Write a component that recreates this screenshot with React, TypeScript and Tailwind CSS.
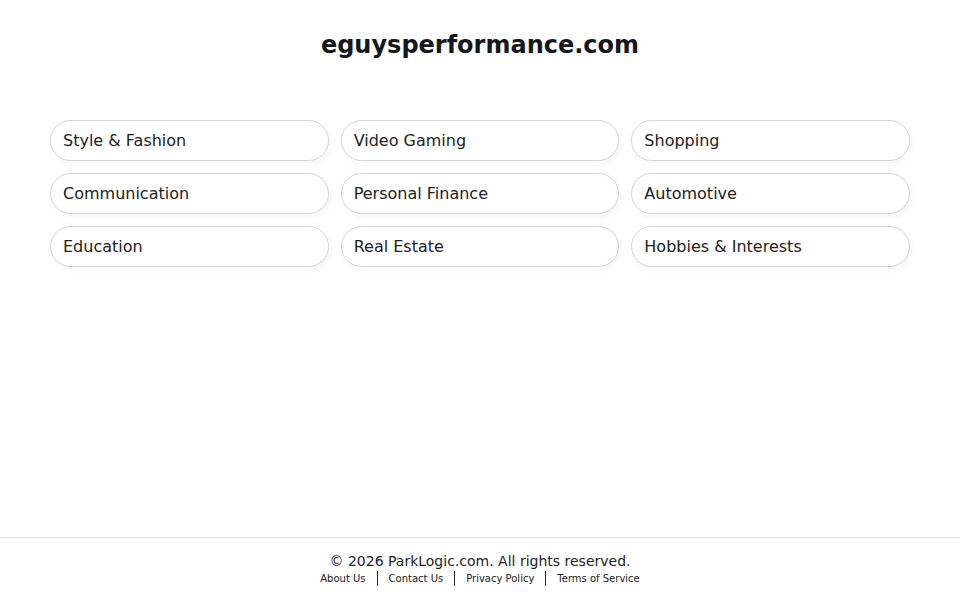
const categories = [
  "Style & Fashion",
  "Video Gaming",
  "Shopping",
  "Communication",
  "Personal Finance",
  "Automotive",
  "Education",
  "Real Estate",
  "Hobbies & Interests",
]

const links = ["About Us", "Contact Us", "Privacy Policy", "Terms of Service"]

export default function App() {
  return (
    <div
      className="min-h-screen flex flex-col bg-white text-[#1f1f1f]"
      style={{ fontFamily: '"DejaVu Sans", sans-serif' }}
    >
      <main className="flex-1">
        <h1 className="text-center text-[24px] font-bold text-[#15171c] pt-[28px] leading-[34px]">
          eguysperformance.com
        </h1>
        <div className="mx-[50px] mt-[58px] grid grid-cols-3 gap-x-3 gap-y-3">
          {categories.map((c) => (
            <a
              key={c}
              href="#"
              className="h-[41px] flex items-center px-[12px] rounded-full border border-[#d4d4d8] bg-white text-[16px] text-[#222] shadow-[2px_3px_6px_rgba(0,0,0,0.04)]"
            >
              {c}
            </a>
          ))}
        </div>
      </main>
      <footer className="border-t border-[#e5e5e5] h-[63px] flex flex-col items-center pt-[14px]">
        <p className="text-[14px] leading-[18px] text-[#222]">© 2026 ParkLogic.com. All rights reserved.</p>
        <div className="flex items-center mt-[1px] text-[10px] text-[#222]">
          {links.map((l, i) => (
            <div key={l} className="flex items-center">
              {i > 0 && <span className="mx-[11px] h-[15px] border-l-[1.5px] border-[#222]" />}
              <a href="#">{l}</a>
            </div>
          ))}
        </div>
      </footer>
    </div>
  )
}
